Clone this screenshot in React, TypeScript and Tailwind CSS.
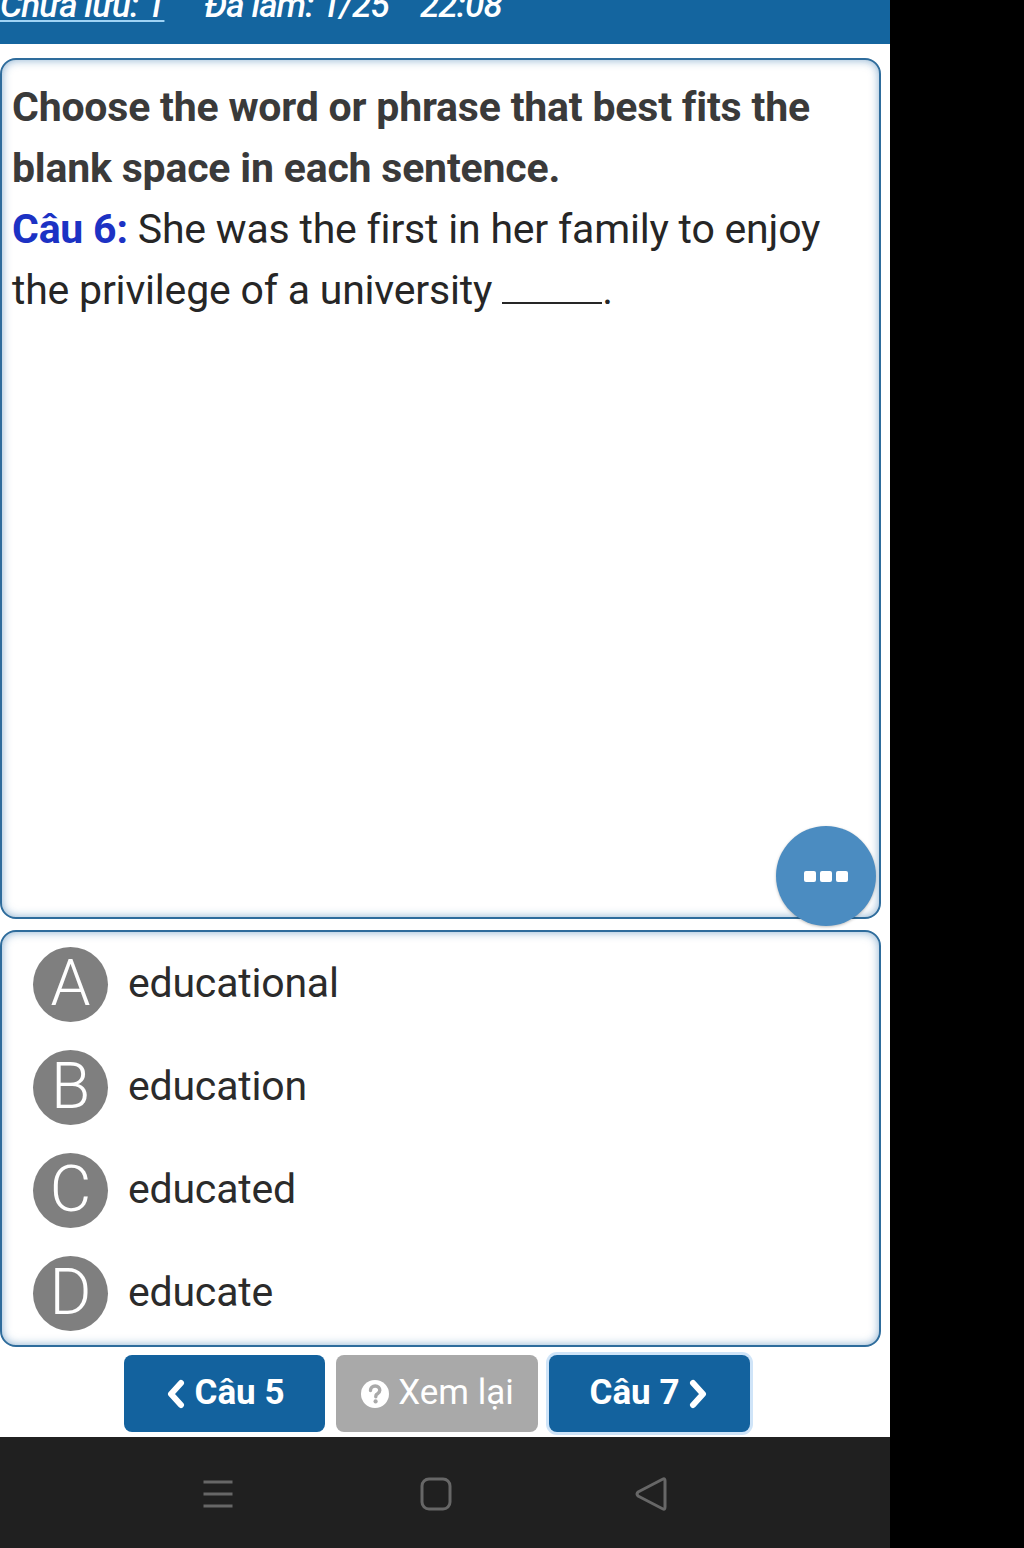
import React from 'react';

const options = [
  { letter: 'A', text: 'educational' },
  { letter: 'B', text: 'education' },
  { letter: 'C', text: 'educated' },
  { letter: 'D', text: 'educate' },
];

export default function App() {
  return (
    <div className="flex w-[1024px] h-[1548px] bg-black font-['Roboto',sans-serif]">
      <div className="w-[890px] h-full flex flex-col bg-white">
        {/* top status strip, scrolled so its text is half cut */}
        <div className="h-[44px] bg-[#14659f] overflow-hidden shrink-0">
          <div className="flex items-end gap-[40px] -mt-[14px] text-white text-[35px] font-medium italic leading-[40px] tracking-tight">
            <span className="underline decoration-[#9fd3f5] decoration-2 underline-offset-[3px]">Chưa lưu: 1</span>
            <span className="flex gap-[31px]">
              <span>Đa làm: 1/25</span>
              <span>22:08</span>
            </span>
          </div>
        </div>

        <div className="flex-1 flex flex-col pt-[14px] pr-[9px]">
          {/* question card */}
          <div className="relative h-[861px] rounded-[16px] border-2 border-[#2e6c9c] shadow-[inset_0_0_10px_rgba(40,110,170,0.55)] px-[10px] pt-[17px]">
            <p className="text-[41px] leading-[61px] font-bold text-[#3a3a3a] tracking-[-0.2px]">
              Choose the word or phrase that best fits the blank space in each sentence.
            </p>
            <p className="text-[41px] leading-[61px] text-[#262626] tracking-[-0.2px]">
              <span className="font-bold text-[#1c32c4]">Câu 6:</span> She was the first in her family to enjoy the privilege of a university{' '}
              <span className="inline-block w-[100px] h-[2px] bg-[#262626] align-baseline" />.
            </p>

            <button className="absolute right-[3px] -bottom-[9px] w-[100px] h-[100px] rounded-full bg-[#4b8cc1] shadow-[0_1px_3px_rgba(0,0,0,0.25)] flex items-center justify-center gap-[4px]">
              <span className="w-[12px] h-[11px] rounded-[2px] bg-white" />
              <span className="w-[12px] h-[11px] rounded-[2px] bg-white" />
              <span className="w-[12px] h-[11px] rounded-[2px] bg-white" />
            </button>
          </div>

          {/* answers card */}
          <div className="mt-[11px] h-[417px] rounded-[16px] border-2 border-[#2e6c9c] shadow-[inset_0_0_10px_rgba(40,110,170,0.55)] flex flex-col">
            {options.map((o) => (
              <div key={o.letter} className="h-[104px] shrink-0 flex items-center pl-[31px] -mt-px first:mt-0">
                <div className="w-[75px] h-[75px] rounded-full bg-[#7f7f7f] flex items-center justify-center text-white text-[64px] leading-none font-light">
                  {o.letter}
                </div>
                <span className="ml-[20px] text-[41px] text-[#2b2b2b] tracking-[-0.2px]">{o.text}</span>
              </div>
            ))}
          </div>

          {/* navigation buttons */}
          <div className="flex gap-[11px] pl-[124px] mt-[8px]">
            <button className="w-[201px] h-[77px] rounded-[8px] bg-[#13629e] text-white text-[35px] font-bold flex items-center justify-center gap-[6px]">
              <svg width="24" height="30" viewBox="0 0 24 30" fill="none">
                <path d="M17 4 L7 15 L17 26" stroke="white" strokeWidth="6" strokeLinecap="round" strokeLinejoin="round" />
              </svg>
              Câu 5
            </button>
            <button className="w-[202px] h-[77px] rounded-[8px] bg-[#a9a9a9] text-white text-[35px] flex items-center justify-center gap-[8px]">
              <svg width="30" height="30" viewBox="0 0 30 30">
                <circle cx="15" cy="15" r="14" fill="white" />
                <path d="M10.5 11.5 C10.5 8.8 12.5 7 15.2 7 C18 7 19.8 8.8 19.8 11.2 C19.8 13.6 17.8 14.4 16.6 15.4 C15.9 16 15.8 16.6 15.8 17.8" stroke="#a9a9a9" strokeWidth="3.4" fill="none" strokeLinecap="round" />
                <circle cx="15.6" cy="22.4" r="2.1" fill="#a9a9a9" />
              </svg>
              Xem lại
            </button>
            <button className="w-[201px] h-[77px] rounded-[8px] bg-[#13629e] text-white text-[35px] font-bold flex items-center justify-center gap-[6px] ring-[3px] ring-[#cfe4f8]">
              Câu 7
              <svg width="24" height="30" viewBox="0 0 24 30" fill="none">
                <path d="M7 4 L17 15 L7 26" stroke="white" strokeWidth="6" strokeLinecap="round" strokeLinejoin="round" />
              </svg>
            </button>
          </div>
        </div>

        {/* android navigation bar */}
        <div className="h-[111px] shrink-0 bg-[#202020] flex items-center">
          <div className="w-full flex items-center pt-[2px]">
            <div className="w-[420px] flex justify-end pr-[186px]">
              <svg width="32" height="30" viewBox="0 0 32 30">
                <path d="M1.5 3 H30.5 M1.5 15 H30.5 M1.5 27 H30.5" stroke="#676767" strokeWidth="3" />
              </svg>
            </div>
            <svg width="32" height="34" viewBox="0 0 32 34">
              <rect x="2" y="2" width="28" height="30" rx="7" stroke="#676767" strokeWidth="3" fill="none" />
            </svg>
            <div className="ml-[182px]">
              <svg width="34" height="36" viewBox="0 0 34 36">
                <path d="M29 3 Q31 2 31 5 V31 Q31 34 29 33 L4 20 Q2 18 4 16 Z" stroke="#676767" strokeWidth="3" fill="none" strokeLinejoin="round" />
              </svg>
            </div>
          </div>
        </div>
      </div>
    </div>
  );
}
